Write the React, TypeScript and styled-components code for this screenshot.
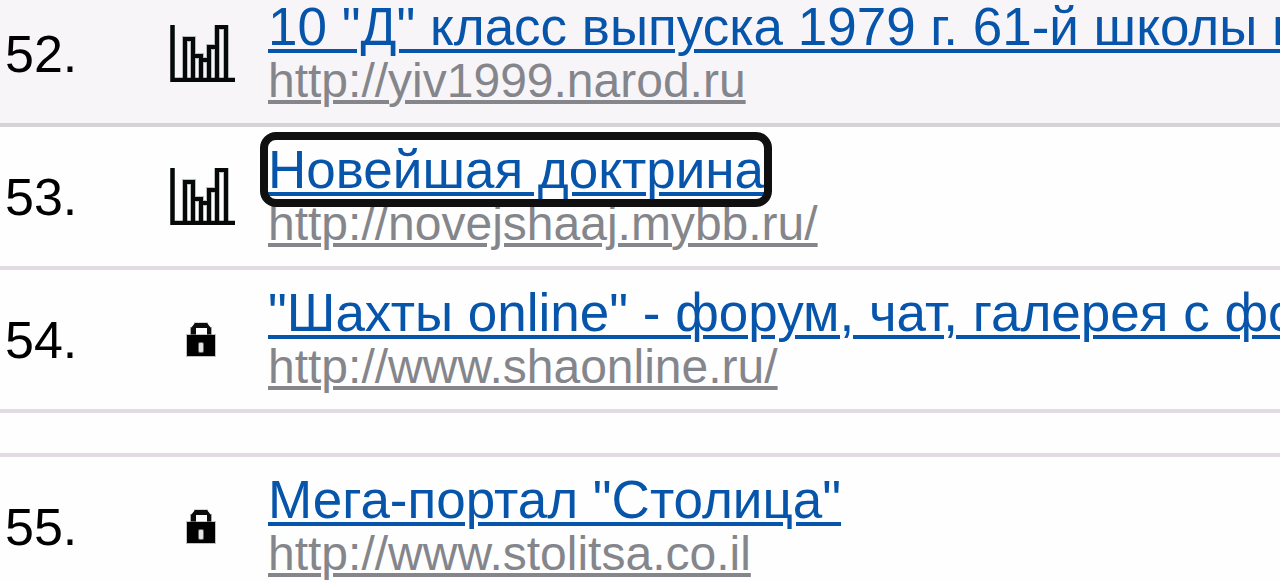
import React from "react";
import styled, { createGlobalStyle } from "styled-components";

const GlobalStyle = createGlobalStyle`
  * { box-sizing: border-box; }
  body {
    margin: 0;
    background: #fefefe;
    color: #000;
    font-family: "Liberation Sans", Arial, sans-serif;
  }
`;

const Viewport = styled.main`
  height: 100vh;
  overflow: hidden;
`;

/* The list is shown slightly scrolled, so the first row starts above the edge. */
const RatingTable = styled.table`
  width: 100%;
  margin-top: -16px;
  table-layout: fixed;
  border-collapse: separate;
  border-spacing: 0;
`;

const SideCol = styled.col`
  width: 134px;
`;

const Row = styled.tr<{ $shaded?: boolean }>`
  background: ${(p) => (p.$shaded ? "#f7f5f8" : "transparent")};
  & > td {
    border-bottom: 4px solid ${(p) => (p.$shaded ? "#d4d4d4" : "#e1dce4")};
  }
`;

const NumberCell = styled.td`
  padding: 0 0 0 5px;
  font-size: 52px;
  line-height: 60px;
`;

const IconCell = styled.td`
  padding: 0;
  svg {
    display: block;
    margin: 0 auto;
  }
`;

const SiteCell = styled.td`
  padding: 17px 0 15px;
  white-space: nowrap;
`;

const SpacerCell = styled.td`
  height: 44px;
  padding: 0;
`;

const TitleLine = styled.div`
  font-size: 53px;
  line-height: 52px;
`;

const UrlLine = styled.div`
  font-size: 48px;
  line-height: 55px;
`;

const TitleLink = styled.a<{ $focused?: boolean }>`
  color: #0755ab;
  text-decoration: underline 4px;
  text-underline-offset: 4px;
  border-radius: 8px;
  outline: ${(p) => (p.$focused ? "8px solid #101010" : "none")};
`;

const UrlLink = styled.a`
  color: #85868c;
  text-decoration: underline 4px;
  text-underline-offset: 3px;
`;

const bars = "M15 53V14h8v39M23 31h8v22M31 35h8v18M39 53V22h8v31M47 53V2h9v51";

const ChartIcon = () => (
  <svg width="68" height="57" viewBox="-3 0 68 57" role="img" aria-label="Статистика">
    <path d={bars} fill="none" stroke="#59605d" strokeWidth="6" opacity=".4" />
    <path d="M2.5 0v55H65" fill="none" stroke="#050a08" strokeWidth="4.5" />
    <path d={bars} fill="none" stroke="#050a08" strokeWidth="4" />
  </svg>
);

const LockIcon = () => (
  <svg width="30" height="35" viewBox="0 0 30 35" role="img" aria-label="Закрыто">
    <path d="M4 14V5h4V.5h14V5h4v9h-5V6H9v8z" fill="#555" opacity=".5" />
    <path d="M5 14V6l4-5h12l4 5v8h-4V6H10v8z" fill="#0c0c0c" />
    <path d="M0 12h30v23H0z" fill="#999" opacity=".6" />
    <path d="M1 13h28v21H1z" fill="#000" />
    <rect x="12" y="20" width="6" height="11" rx="2" fill="#666" />
    <rect x="13" y="21" width="4" height="9" rx="1" fill="#e4e4e4" />
  </svg>
);

type Site = {
  place: number;
  title: string;
  url: string;
  open?: boolean;
  shaded?: boolean;
  focused?: boolean;
};

const beforeGap: Site[] = [
  { place: 52, title: '10 "Д" класс выпуска 1979 г. 61-й школы г', url: "http://yiv1999.narod.ru", open: true, shaded: true },
  { place: 53, title: "Новейшая доктрина", url: "http://novejshaaj.mybb.ru/", open: true, focused: true },
  { place: 54, title: '"Шахты online" - форум, чат, галерея с фо', url: "http://www.shaonline.ru/" },
];

const afterGap: Site[] = [
  { place: 55, title: 'Мега-портал "Столица"', url: "http://www.stolitsa.co.il" },
];

const SiteRow = ({ site }: { site: Site }) => (
  <Row $shaded={site.shaded}>
    <NumberCell>{site.place}.</NumberCell>
    <IconCell>{site.open ? <ChartIcon /> : <LockIcon />}</IconCell>
    <SiteCell>
      <TitleLine>
        <TitleLink href={site.url} $focused={site.focused}>{site.title}</TitleLink>
      </TitleLine>
      <UrlLine>
        <UrlLink href={site.url}>{site.url}</UrlLink>
      </UrlLine>
    </SiteCell>
  </Row>
);

export default function App() {
  return (
    <>
      <GlobalStyle />
      <Viewport>
        <RatingTable>
          <colgroup>
            <SideCol />
            <SideCol />
            <col />
          </colgroup>
          <tbody>
            {beforeGap.map((s) => <SiteRow key={s.place} site={s} />)}
            <Row>
              <SpacerCell colSpan={3} />
            </Row>
            {afterGap.map((s) => <SiteRow key={s.place} site={s} />)}
          </tbody>
        </RatingTable>
      </Viewport>
    </>
  );
}
